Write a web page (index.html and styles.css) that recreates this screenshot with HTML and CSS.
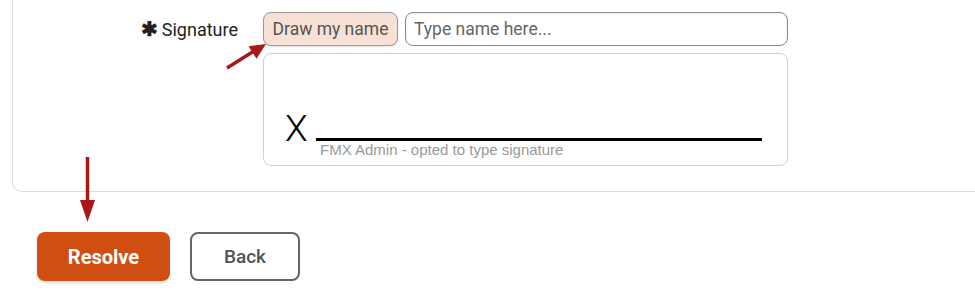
FILE: index.html
```html
<!DOCTYPE html>
<html lang="en">
<head>
    <meta charset="UTF-8">
    <meta name="viewport" content="width=device-width, initial-scale=1.0">
    <title>Resolve</title>
    <link rel="stylesheet" href="styles.css">
</head>
<body>
    <section class="card">
        <div class="field">
            <label class="field-label" for="sigName"><span class="req">&#10033;</span> Signature</label>
            <div class="field-controls">
                <div class="sig-top">
                    <button type="button" class="draw-btn">Draw my name</button>
                    <input type="text" id="sigName" class="sig-input" placeholder="Type name here...">
                </div>
                <div class="sig-box">
                    <div class="sig-line">
                        <span class="sig-x">X</span>
                        <span class="sig-rule"></span>
                    </div>
                    <p class="sig-caption">FMX Admin - opted to type signature</p>
                </div>
            </div>
        </div>
    </section>

    <div class="actions">
        <button type="button" class="btn btn-resolve">Resolve</button>
        <button type="button" class="btn btn-back">Back</button>
    </div>

    <svg class="arrows" width="975" height="298" viewBox="0 0 975 298">
        <line x1="227" y1="68" x2="254" y2="51" stroke="#a81818" stroke-width="3.5"/>
        <polygon points="266,44 256.5,58.8 248.6,46.2" fill="#a81818"/>
        <line x1="87.5" y1="157" x2="87.5" y2="203" stroke="#a81818" stroke-width="3.5"/>
        <polygon points="80,200 95,200 87.5,222" fill="#a81818"/>
    </svg>
</body>
</html>
```

FILE: styles.css
```css
body {
    font-family: Roboto, "Liberation Sans", sans-serif;
    margin: 0;
    padding: 0;
    background: #fff;
    position: relative;
    width: 975px;
    height: 298px;
    overflow: hidden;
}
.card {
    margin-left: 12px;
    height: 179px;
    padding-top: 12px;
    border-left: 1px solid #dcdcdc;
    border-bottom: 1px solid #dcdcdc;
    border-bottom-left-radius: 10px;
}
.field {
    display: flex;
}
.field-label {
    width: 225px;
    height: 34px;
    padding-right: 25px;
    display: flex;
    align-items: center;
    justify-content: flex-end;
    font-size: 18px;
    color: #222;
}
.req {
    font-size: 20px;
    font-weight: bold;
    margin-right: 4px;
}
.field-controls {
    width: 525px;
}
.sig-top {
    display: flex;
    gap: 7px;
}
.draw-btn {
    width: 135px;
    height: 34px;
    background: #f7e1d7;
    border: 1px solid #999;
    border-radius: 8px;
    font-family: Roboto, sans-serif;
    font-size: 17.5px;
    color: #555;
    padding: 0;
    box-shadow: 0 1px 2px rgba(0, 0, 0, 0.12);
}
.sig-input {
    flex: 1;
    height: 34px;
    box-sizing: border-box;
    border: 1px solid #8a8a8a;
    border-radius: 8px;
    padding: 0 8px;
    font-family: Roboto, sans-serif;
    font-size: 17.5px;
    box-shadow: inset 0 1px 3px rgba(0, 0, 0, 0.08);
}
.sig-input::placeholder {
    color: #666;
}
.sig-box {
    margin-top: 7px;
    height: 111px;
    border: 1px solid #cfcfcf;
    border-radius: 8px;
}
.sig-line {
    display: flex;
    align-items: flex-end;
    padding: 61px 25px 0 21px;
}
.sig-x {
    font-size: 37px;
    font-weight: 300;
    line-height: 28px;
    color: #000;
}
.sig-rule {
    flex: 1;
    height: 3px;
    background: #000;
    margin-left: 8px;
    margin-bottom: 2px;
}
.sig-caption {
    margin: -2px 0 0 56px;
    font-family: "Liberation Sans", Arial, sans-serif;
    font-size: 15px;
    color: #999;
}
.actions {
    display: flex;
    gap: 20px;
    margin: 40px 0 0 37px;
}
.btn {
    height: 49px;
    border-radius: 8px;
    font-family: Roboto, sans-serif;
    font-size: 19px;
    padding: 0;
    cursor: pointer;
}
.btn-resolve {
    width: 133px;
    background: #d04e12;
    border: none;
    color: #fff;
    font-size: 20px;
    font-weight: bold;
    box-shadow: 0 2px 3px rgba(0, 0, 0, 0.15);
}
.btn-back {
    width: 110px;
    background: #fff;
    border: 2px solid #666;
    color: #555;
    font-weight: 500;
}
.arrows {
    position: absolute;
    top: 0;
    left: 0;
    pointer-events: none;
}
```
